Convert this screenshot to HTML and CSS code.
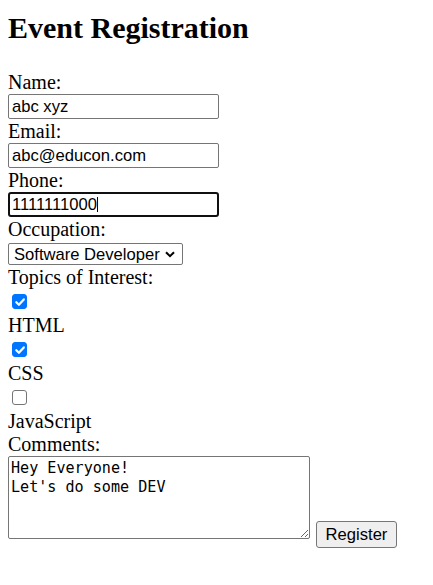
FILE: index.html
```html
<!DOCTYPE html>
<html lang="en">
<head>
<meta charset="utf-8">
<title>Event Registration</title>
<link rel="stylesheet" href="styles.css">
</head>
<body>
<h1 class="title">Event Registration</h1>
<form class="form">
  <label class="label" for="name">Name:</label>
  <input class="field" id="name" type="text" value="abc xyz">
  <label class="label" for="email">Email:</label>
  <input class="field" id="email" type="email" value="abc@educon.com">
  <label class="label" for="phone">Phone:</label>
  <span class="field-wrap">
    <input class="field field-focus" id="phone" type="tel" value="1111111000">
    <span class="caret"></span>
  </span>
  <label class="label" for="occ">Occupation:</label>
  <span class="select-wrap">
    <select class="select" id="occ">
      <option>Software Developer</option>
      <option>Designer</option>
      <option>Student</option>
    </select>
    <svg class="chevron" width="10" height="7" viewBox="0 0 10 7"><path d="M1 1.2 L5 5.2 L9 1.2" fill="none" stroke="#000" stroke-width="2"/></svg>
  </span>
  <span class="label">Topics of Interest:</span>
  <span class="check-row">
    <input class="check" type="checkbox" id="t1" checked>
    <svg class="tick" width="14" height="14" viewBox="0 0 14 14"><path d="M3.3 7.2 L5.9 9.8 L10.8 4.4" fill="none" stroke="#fff" stroke-width="2.2" stroke-linecap="round" stroke-linejoin="round"/></svg>
  </span>
  <label class="label" for="t1">HTML</label>
  <span class="check-row">
    <input class="check" type="checkbox" id="t2" checked>
    <svg class="tick" width="14" height="14" viewBox="0 0 14 14"><path d="M3.3 7.2 L5.9 9.8 L10.8 4.4" fill="none" stroke="#fff" stroke-width="2.2" stroke-linecap="round" stroke-linejoin="round"/></svg>
  </span>
  <label class="label" for="t2">CSS</label>
  <span class="check-row"><input class="check" type="checkbox" id="t3"></span>
  <label class="label" for="t3">JavaScript</label>
  <label class="label label-tight" for="comments">Comments:</label>
  <div class="bottom-row">
    <textarea class="comments" id="comments">Hey Everyone!
Let's do some DEV</textarea>
    <button class="btn" type="button">Register</button>
  </div>
</form>
</body>
</html>
```
FILE: styles.css
```css
html, body {
  background: #fff;
  color: #000;
}
body {
  margin: 8px;
  font-family: "Liberation Serif", "Times New Roman", serif;
}
.title {
  margin: 3px 0 25px;
  font: bold 30px/34px "Liberation Serif", "Times New Roman", serif;
}
.form {
  display: flex;
  flex-direction: column;
  align-items: flex-start;
}
.label {
  display: block;
  font: 20px/24px "Liberation Serif", "Times New Roman", serif;
}
.label-tight {
  line-height: 23px;
}
.field {
  box-sizing: border-box;
  width: 211px;
  height: 25px;
  margin: 0;
  padding: 1px 3px;
  border: 1px solid #767676;
  border-radius: 2px;
  background: #fff;
  color: #000;
  font: 16.6px "Liberation Sans", Arial, sans-serif;
}
.field-wrap {
  position: relative;
  display: block;
}
.field-focus {
  border: 2px solid #101010;
  border-radius: 3px;
  padding: 0 2px;
  outline: none;
}
.caret {
  position: absolute;
  left: 89px;
  top: 5px;
  width: 1px;
  height: 15px;
  background: #000;
}
.select-wrap {
  position: relative;
  display: block;
  margin-top: 2px;
}
.select {
  appearance: none;
  -webkit-appearance: none;
  box-sizing: border-box;
  width: 175px;
  height: 22px;
  margin: 0;
  padding: 0 0 0 5px;
  border: 1px solid #767676;
  border-radius: 2px;
  background: #fff;
  color: #000;
  font: 16.6px "Liberation Sans", Arial, sans-serif;
}
.chevron {
  position: absolute;
  left: 157px;
  top: 8px;
  pointer-events: none;
}
.check-row {
  position: relative;
  display: block;
  height: 24px;
}
.check {
  appearance: none;
  -webkit-appearance: none;
  box-sizing: border-box;
  display: block;
  width: 15px;
  height: 15px;
  margin: 5px 0 0 4px;
  border: 1px solid #767676;
  border-radius: 3px;
  background: #fff;
}
.check:checked {
  border-color: #0075ff;
  background: #0075ff;
}
.tick {
  position: absolute;
  left: 4.5px;
  top: 5.5px;
  pointer-events: none;
}
.bottom-row {
  display: flex;
  align-items: flex-start;
  gap: 6px;
}
.comments {
  box-sizing: border-box;
  width: 302px;
  height: 83px;
  margin: 0;
  padding: 2px 2px;
  border: 1px solid #767676;
  border-radius: 2px;
  font: 15.1px/19px "DejaVu Sans Mono", Consolas, monospace;
  color: #000;
  background: #fff;
}
.btn {
  box-sizing: border-box;
  margin-top: 65px;
  width: 81px;
  height: 27px;
  padding: 0 6px;
  border: 1px solid #767676;
  border-radius: 3px;
  background: #efefef;
  color: #000;
  font: 16.6px "Liberation Sans", Arial, sans-serif;
}
```
